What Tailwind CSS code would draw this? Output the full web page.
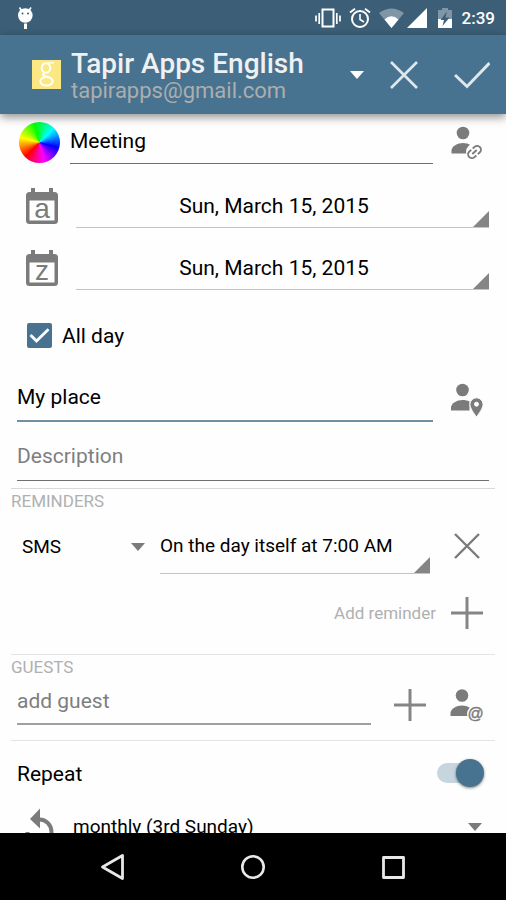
<!DOCTYPE html>
<html lang="en">
<head>
<meta charset="utf-8">
<meta name="viewport" content="width=device-width, initial-scale=1">
<title>Edit event</title>
<script src="https://cdn.jsdelivr.net/npm/@tailwindcss/browser@4"></script>
</head>
<body class="flex h-screen flex-col overflow-hidden bg-[#fefefe] font-['Roboto','Noto_Sans',sans-serif] text-[21px] leading-7 text-black">

<!-- Status bar -->
<div class="flex h-[35px] shrink-0 items-center bg-[#3c5f77] pr-[11px] pl-[15px] text-white">
  <svg class="h-6 w-5" viewBox="0 0 20 24" fill="currentColor" aria-hidden="true">
    <path d="M4.500 1.500l2 3M16 1.500l-2 3" stroke="currentColor" stroke-width="1.600"/>
    <circle cx="10.300" cy="9.500" r="7.300"/>
    <path d="M9 17.500h3V23H9z"/>
    <circle cx="7.500" cy="7.500" r="1" fill="#3c5f77"/><circle cx="13" cy="7.500" r="1" fill="#3c5f77"/>
  </svg>
  <div class="ml-auto flex items-center">
    <svg class="mr-2 h-5 w-[26px]" viewBox="0 0 26 20" fill="none" stroke="currentColor" aria-hidden="true">
      <rect x="7.500" y="1.500" width="11" height="17" stroke-width="2"/>
      <path d="M4.200 5v11M21.800 5v11" stroke-width="1.700"/><path d="M1 7.500v6M25 7.500v6" stroke-width="1.700"/>
    </svg>
    <svg class="mr-2 h-5 w-[22px]" viewBox="0 0 22 20" fill="none" stroke="currentColor" stroke-width="2" aria-hidden="true">
      <circle cx="11" cy="11" r="8"/><path d="M11 6v5.500l4 2.500" stroke-width="1.600"/><path d="M1 4.500L6 .800M21 4.500L16 .800"/>
    </svg>
    <svg class="mr-[3px] h-5 w-[25px]" viewBox="0 0 25 20" fill="currentColor" aria-hidden="true">
      <path opacity=".35" d="M0 5Q12.500-4 25 5L12.500 20z"/><path d="M5.500 11.500Q12.500 5 19.500 11.500L12.500 20z"/>
    </svg>
    <svg class="mr-[11px] h-5 w-5" viewBox="0 0 20 20" fill="currentColor" aria-hidden="true"><path d="M20 0v20H0z"/></svg>
    <svg class="mr-[10px] h-5 w-[14px]" viewBox="0 0 14 20" fill="currentColor" aria-hidden="true">
      <path opacity=".35" d="M0 2h4V0h6v2h4v9H0z"/><path d="M0 11h14v9H0z"/>
      <path d="M9 3.500L2.500 12H6l-1.500 6L11.500 9.500H7.500z" fill="#3c5f77"/>
    </svg>
    <span class="text-[17px] leading-5 font-medium">2:39</span>
  </div>
</div>

<!-- App bar -->
<header class="z-10 flex h-[79px] shrink-0 items-center bg-[#477391] pr-4 pl-8 shadow-[0_3px_9px_rgba(0,0,0,0.45)]">
  <svg class="mr-[10px] h-[29px] w-[29px] shrink-0" viewBox="0 0 29 29" aria-hidden="true">
    <path fill="#fce883" d="M0 0h29v29H0z"/>
    <g fill="none" stroke="#fff">
      <ellipse cx="14" cy="8" rx="4.300" ry="4.800" stroke-width="2"/>
      <path d="M15 2.800h7" stroke-width="1.300"/>
      <path d="M12.500 12.500c-3.500 2.500 0 3.700 3.500 4.700" stroke-width="2"/>
      <ellipse cx="14.500" cy="21.300" rx="6.200" ry="4.300" stroke-width="2"/>
    </g>
  </svg>
  <button type="button" class="flex min-w-0 flex-1 items-center text-left">
    <span class="min-w-0 flex-1 pt-0.5 whitespace-nowrap">
      <span class="block text-[28px] leading-[30px] font-medium text-[#f0f0f0]">Tapir Apps English</span>
      <span class="block text-[22px] leading-6 text-[#adadad]">tapirapps@gmail.com</span>
    </span>
    <svg class="h-2 w-[14px] shrink-0" viewBox="0 0 14 8" fill="#fff" aria-hidden="true"><path d="M0 0h14L7 8z"/></svg>
  </button>
  <button type="button" aria-label="Cancel" class="ml-[26px]">
    <svg class="h-7 w-7" viewBox="0 0 28 28" fill="none" stroke="#dfe7ec" stroke-width="2.700"><path d="M1 1l26 26M27 1L1 27"/></svg>
  </button>
  <button type="button" aria-label="Save" class="ml-9">
    <svg class="h-7 w-9" viewBox="0 0 36 28" fill="none" stroke="#dfe7ec" stroke-width="3"><path d="M1 14l12 11.500L35.500 2"/></svg>
  </button>
</header>

<main class="min-h-0 flex-1 overflow-hidden">
  <form>
    <!-- Title -->
    <div class="flex h-[52px] items-start pr-[22px] pl-[19px]">
      <button type="button" aria-label="Event color" class="mt-2 mr-[10px] h-[41px] w-[41px] shrink-0 rounded-full bg-[conic-gradient(from_225deg,red,yellow,lime,cyan,blue,magenta,red)]"></button>
      <input type="text" aria-label="Title" value="Meeting" class="h-[50px] min-w-0 flex-1 border-b border-[#707070] bg-transparent pt-1 outline-none">
      <button type="button" aria-label="Link contact" class="mt-[12px] ml-[17px] shrink-0">
        <svg class="h-[34px] w-[34px]" viewBox="0 0 34 34" fill="#7b7b7b">
          <circle cx="13" cy="7" r="6.300"/><path d="M1.500 27.500v-3c0-4 6-7.500 11.500-7.500s11 3.500 11.500 7.500v3z"/>
          <circle cx="24.500" cy="26" r="8.500" fill="#fefefe"/>
          <g transform="rotate(-42 24.500 26)" fill="none" stroke="#7b7b7b" stroke-width="1.900">
            <path d="M23.500 22.200h-2.500a3.800 3.800 0 0 0 0 7.600h2.500M25.500 22.200h2.500a3.800 3.800 0 0 1 0 7.600h-2.500M21.500 26h6"/>
          </g>
        </svg>
      </button>
    </div>

    <!-- Start date -->
    <div class="flex h-[62px] items-end pr-[17px] pl-[26px]">
      <svg class="mr-[18px] mb-1 h-9 w-8 shrink-0" viewBox="0 0 32 36" aria-hidden="true">
        <path fill="#7b7b7b" fill-rule="evenodd" d="M5 0h4v4h14V0h4v4h1.500A3.500 3.500 0 0 1 32 7.500v25a3.500 3.500 0 0 1-3.500 3.500h-25A3.500 3.500 0 0 1 0 32.500v-25A3.500 3.500 0 0 1 3.500 4H5zM3.500 12.500v20h25v-20z"/>
        <text x="16" y="30" text-anchor="middle" font-family="Liberation Sans" font-size="28" fill="#7b7b7b">a</text>
      </svg>
      <button type="button" aria-label="Start date" class="grid h-[46px] min-w-0 flex-1 border-b border-[#c4c4c4]">
        <span class="col-start-1 row-start-1 self-center pt-0.5 pr-[17px] text-center">Sun, March 15, 2015</span>
        <svg class="col-start-1 row-start-1 h-4 w-4 self-end justify-self-end" viewBox="0 0 16 16" fill="#858585" aria-hidden="true"><path d="M16 0v16H0z"/></svg>
      </button>
    </div>

    <!-- End date -->
    <div class="flex h-[62px] items-end pr-[17px] pl-[26px]">
      <svg class="mr-[18px] mb-1 h-9 w-8 shrink-0" viewBox="0 0 32 36" aria-hidden="true">
        <path fill="#7b7b7b" fill-rule="evenodd" d="M5 0h4v4h14V0h4v4h1.500A3.500 3.500 0 0 1 32 7.500v25a3.500 3.500 0 0 1-3.500 3.500h-25A3.500 3.500 0 0 1 0 32.500v-25A3.500 3.500 0 0 1 3.500 4H5zM3.500 12.500v20h25v-20z"/>
        <text x="16" y="30" text-anchor="middle" font-family="Liberation Sans" font-size="28" fill="#7b7b7b">z</text>
      </svg>
      <button type="button" aria-label="End date" class="grid h-[46px] min-w-0 flex-1 border-b border-[#c4c4c4]">
        <span class="col-start-1 row-start-1 self-center pt-0.5 pr-[17px] text-center">Sun, March 15, 2015</span>
        <svg class="col-start-1 row-start-1 h-4 w-4 self-end justify-self-end" viewBox="0 0 16 16" fill="#858585" aria-hidden="true"><path d="M16 0v16H0z"/></svg>
      </button>
    </div>

    <!-- All day -->
    <div class="flex h-[90px] items-center pl-[27px]">
      <label class="flex items-center gap-[10px]">
        <span class="grid h-[25px] w-[25px]">
          <input type="checkbox" checked class="peer col-start-1 row-start-1 appearance-none rounded-[2px] border-2 border-[#477391] checked:bg-[#477391]">
          <svg class="pointer-events-none invisible col-start-1 row-start-1 h-[25px] w-[25px] peer-checked:visible" viewBox="0 0 25 25" fill="none" stroke="#fff" stroke-width="2.800" aria-hidden="true"><path d="M3.500 12l6 6L21.500 6.300"/></svg>
        </span>
        <span class="pt-0.5">All day</span>
      </label>
    </div>

    <!-- Place -->
    <div class="flex h-[42px] items-end pr-[22px] pl-[17px]">
      <input type="text" aria-label="Location" value="My place" class="h-[50px] min-w-0 flex-1 border-b-2 border-[#6f8fa6] bg-transparent pt-0.5 outline-none">
      <button type="button" aria-label="Pick contact address" class="mb-[5px] ml-[17px] shrink-0">
        <svg class="h-[34px] w-[34px]" viewBox="0 0 34 34" fill="#7b7b7b">
          <circle cx="12.500" cy="7" r="6.300"/><path d="M1 27.500v-3c0-4 6-7.500 11.500-7.500 3 0 5 .500 7 1.500v9z"/>
          <path fill-rule="evenodd" stroke="#fefefe" stroke-width="1" d="M26.500 14.800a6.600 6.600 0 0 1 6.600 6.600c0 4.500-6.600 12.400-6.600 12.400s-6.600-7.900-6.600-12.400a6.600 6.600 0 0 1 6.600-6.600zM26.500 19.200a2 2 0 1 0 0 4 2 2 0 0 0 0-4z"/>
        </svg>
      </button>
    </div>

    <!-- Description -->
    <div class="px-[17px] pt-2 pb-[7px]">
      <input type="text" aria-label="Description" placeholder="Description" class="block h-[51px] w-full border-b border-[#707070] bg-transparent pt-0.5 outline-none placeholder:text-[#7e7e7e]">
    </div>

    <!-- Reminders -->
    <section class="mx-[11px] border-t border-[#d9d9d9]">
      <h2 class="text-[17px] leading-6 text-[#b0b0b0]">REMINDERS</h2>
      <div class="flex h-[61px] items-end pr-[15px] pl-[11px] text-[19px]">
        <div class="mb-[13px] grid w-[123px] shrink-0 items-center">
          <select aria-label="Reminder type" class="col-start-1 row-start-1 h-7 appearance-none bg-transparent"><option>SMS</option><option>Notification</option></select>
          <svg class="pointer-events-none col-start-1 row-start-1 h-2 w-[14px] justify-self-end" viewBox="0 0 14 8" fill="#7b7b7b" aria-hidden="true"><path d="M0 0h14L7 8z"/></svg>
        </div>
        <button type="button" aria-label="Reminder time" class="ml-[15px] grid h-[56px] min-w-0 flex-1 border-b border-[#c4c4c4] text-left">
          <span class="col-start-1 row-start-1 self-center whitespace-nowrap">On the day itself at 7:00 AM</span>
          <svg class="col-start-1 row-start-1 h-4 w-4 self-end justify-self-end" viewBox="0 0 16 16" fill="#858585" aria-hidden="true"><path d="M16 0v16H0z"/></svg>
        </button>
        <button type="button" aria-label="Remove reminder" class="mb-[15px] ml-6 shrink-0">
          <svg class="h-[26px] w-[26px]" viewBox="0 0 26 26" fill="none" stroke="#7b7b7b" stroke-width="2.400"><path d="M1 1l24 24M25 1L1 25"/></svg>
        </button>
      </div>
      <div class="flex h-20 justify-end pr-3 pb-0.5">
        <button type="button" class="flex items-center gap-[15px] text-[17px] leading-6 text-[#b0b0b0]">
          <span>Add reminder</span>
          <svg class="h-8 w-8" viewBox="0 0 32 32" fill="none" stroke="#858585" stroke-width="3" aria-hidden="true"><path d="M16 0v32M0 16h32"/></svg>
        </button>
      </div>
    </section>

    <!-- Guests -->
    <section class="mx-[11px] border-t border-[#e4e4e4]">
      <h2 class="h-[25px] text-[17px] leading-6 text-[#b0b0b0]">GUESTS</h2>
      <div class="flex h-[60px] items-start pr-[10px] pl-[6px]">
        <input type="text" aria-label="Add guest" placeholder="add guest" class="h-[45px] min-w-0 flex-1 border-b-2 border-[#a0a0a0] bg-transparent pb-0.5 outline-none placeholder:text-[#7e7e7e]">
        <button type="button" aria-label="Add guest" class="mt-[9px] ml-[23px] shrink-0">
          <svg class="h-8 w-8" viewBox="0 0 32 32" fill="none" stroke="#858585" stroke-width="3"><path d="M16 0v32M0 16h32"/></svg>
        </button>
        <button type="button" aria-label="Pick guest from contacts" class="mt-2 ml-[23px] shrink-0">
          <svg class="h-[34px] w-[36px]" viewBox="0 0 36 34" fill="#7b7b7b">
            <circle cx="13" cy="7.500" r="6.300"/><path d="M1.500 28v-3c0-4 6-7.500 11.500-7.500s11 3.500 11.500 7.500v3z"/>
            <circle cx="26.500" cy="26" r="8.500" fill="#fefefe"/>
            <text x="26.500" y="30.500" text-anchor="middle" font-family="Liberation Sans" font-size="16" stroke="#7b7b7b" stroke-width=".400">@</text>
          </svg>
        </button>
      </div>
    </section>

    <!-- Repeat -->
    <section class="mx-[11px] border-t border-[#e4e4e4]">
      <label class="flex h-[64px] items-center justify-between pr-[11px] pl-[6px]">
        <span class="pt-0.5">Repeat</span>
        <span class="grid w-[47px] items-center">
          <input type="checkbox" role="switch" checked class="peer col-start-1 row-start-1 h-5 w-[44px] appearance-none rounded-full bg-[#c7d5de]">
          <span class="col-start-1 row-start-1 h-7 w-7 rounded-full bg-[#477391] shadow-[0_1px_3px_rgba(0,0,0,0.5)] peer-checked:justify-self-end"></span>
        </span>
      </label>
      <div class="flex h-[44px] items-center pr-[13px] pl-[7px] text-[19px]">
        <svg class="mr-3 h-[43px] w-[43px] shrink-0" viewBox="0 0 43 43" aria-hidden="true">
          <path d="M12 13L22 2.500v20z" fill="#7b7b7b"/>
          <path d="M21.500 13.500A12 12.500 0 1 1 9.500 26" fill="none" stroke="#7b7b7b" stroke-width="4"/>
        </svg>
        <div class="grid min-w-0 flex-1 items-center">
          <select aria-label="Repeat rule" class="col-start-1 row-start-1 h-7 appearance-none bg-transparent"><option>monthly (3rd Sunday)</option><option>weekly</option></select>
          <svg class="pointer-events-none col-start-1 row-start-1 h-2 w-[14px] justify-self-end" viewBox="0 0 14 8" fill="#7b7b7b" aria-hidden="true"><path d="M0 0h14L7 8z"/></svg>
        </div>
      </div>
    </section>
  </form>
</main>

<!-- System navigation -->
<nav class="flex h-[67px] shrink-0 items-center justify-center gap-[116px] bg-black">
  <button type="button" aria-label="Back"><svg class="h-[26px] w-6" viewBox="0 0 24 26" fill="none" stroke="#e8e8e8" stroke-width="2.800" stroke-linejoin="round"><path d="M21.500 1.500v23L1.500 13z"/></svg></button>
  <button type="button" aria-label="Home"><svg class="h-[26px] w-6" viewBox="0 0 24 26" fill="none" stroke="#e8e8e8" stroke-width="2.600"><circle cx="12" cy="13" r="10.700"/></svg></button>
  <button type="button" aria-label="Recent apps"><svg class="h-[26px] w-6" viewBox="0 0 24 26" fill="none" stroke="#e8e8e8" stroke-width="2.800" stroke-linejoin="round"><path d="M2.500 3.500h20v20h-20z"/></svg></button>
</nav>
</body>
</html>
